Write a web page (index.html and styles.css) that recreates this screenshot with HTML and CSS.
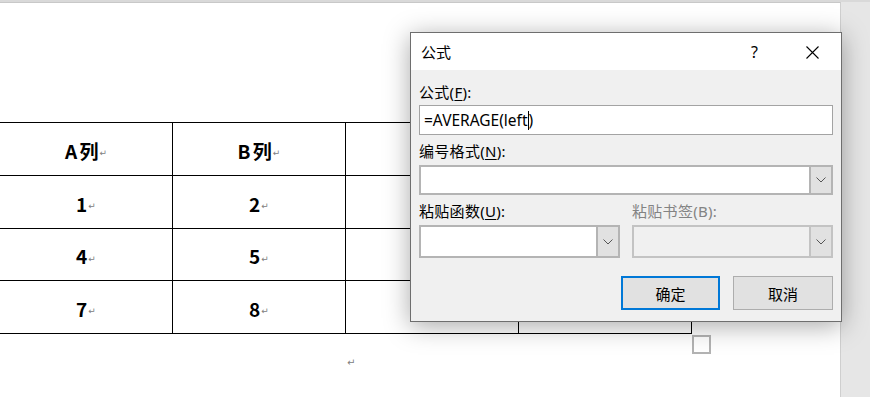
FILE: index.html
```html
<!DOCTYPE html>
<html lang="zh-CN">
<head>
<meta charset="utf-8">
<title>公式</title>
<link rel="stylesheet" href="styles.css">
</head>
<body>
<div class="app">
  <div class="page">
    <div class="grid">
      <div class="cell">A 列<span class="pm">↵</span></div>
      <div class="cell">B 列<span class="pm">↵</span></div>
      <div class="cell"><span class="pm">↵</span></div>
      <div class="cell"><span class="pm">↵</span></div>
      <div class="cell">1<span class="pm">↵</span></div>
      <div class="cell">2<span class="pm">↵</span></div>
      <div class="cell"><span class="pm">↵</span></div>
      <div class="cell"><span class="pm">↵</span></div>
      <div class="cell short">4<span class="pm">↵</span></div>
      <div class="cell short">5<span class="pm">↵</span></div>
      <div class="cell short"><span class="pm">↵</span></div>
      <div class="cell short"><span class="pm">↵</span></div>
      <div class="cell">7<span class="pm">↵</span></div>
      <div class="cell">8<span class="pm">↵</span></div>
      <div class="cell"><span class="pm">↵</span></div>
      <div class="cell"><span class="pm">↵</span></div>
    </div>
    <div class="handle-row"><span class="handle"></span></div>
    <div class="para"><span class="pm">↵</span></div>
  </div>
  <div class="side"></div>
</div>

<div class="dialog">
  <div class="titlebar">
    <span class="title">公式</span>
    <span class="help">?</span>
    <svg class="close" width="13" height="13" viewBox="0 0 13 13"><path d="M0.5 0.5 L12.5 12.5 M12.5 0.5 L0.5 12.5" stroke="#000" stroke-width="1.1" fill="none"/></svg>
  </div>
  <div class="body">
    <div class="label l1">公式(<u>F</u>):</div>
    <div class="input"><span class="val">=AVERAGE(left</span><span class="caret"></span><span class="val">)</span></div>
    <div class="label l2">编号格式(<u>N</u>):</div>
    <div class="combo wide">
      <div class="field"></div>
      <div class="drop"><svg width="10" height="6" viewBox="0 0 10 6"><path d="M0.5 0.5 L5 5 L9.5 0.5" stroke="#555" stroke-width="1" fill="none"/></svg></div>
    </div>
    <div class="row labels">
      <div class="label half">粘贴函数(<u>U</u>):</div>
      <div class="label half disabled">粘贴书签(B):</div>
    </div>
    <div class="row selects">
      <div class="combo half">
        <div class="field"></div>
        <div class="drop"><svg width="10" height="6" viewBox="0 0 10 6"><path d="M0.5 0.5 L5 5 L9.5 0.5" stroke="#555" stroke-width="1" fill="none"/></svg></div>
      </div>
      <div class="combo half off">
        <div class="field"></div>
        <div class="drop"><svg width="10" height="6" viewBox="0 0 10 6"><path d="M0.5 0.5 L5 5 L9.5 0.5" stroke="#555" stroke-width="1" fill="none"/></svg></div>
      </div>
    </div>
    <div class="row buttons">
      <div class="btn primary">确定</div>
      <div class="btn">取消</div>
    </div>
  </div>
</div>
</body>
</html>
```

FILE: styles.css
```css
html, body {
  margin: 0;
  padding: 0;
}
body {
  width: 870px;
  height: 397px;
  overflow: hidden;
  background: #e6e6e6;
  position: relative;
  font-family: "Noto Sans", "Noto Sans CJK SC", sans-serif;
}
.app {
  display: flex;
  height: 397px;
  padding-top: 2px;
  box-sizing: border-box;
  background: #d9d9d9;
}
.page {
  width: 841px;
  flex: none;
  background: #fff;
  border-top: 1px solid #c8c8c8;
  border-right: 1px solid #cfcfcf;
  padding-top: 119px;
  box-sizing: border-box;
  height: 395px;
}
.side {
  flex: 1;
  background: #e6e6e6;
}
.grid {
  display: grid;
  grid-template-columns: repeat(4, 173px);
  margin-left: -1px;
  width: max-content;
  border-top: 1px solid #000;
  border-left: 1px solid #000;
}
.cell {
  border-right: 1px solid #000;
  border-bottom: 1px solid #000;
  display: flex;
  align-items: center;
  justify-content: center;
  font-family: "Noto Sans CJK SC", sans-serif;
  font-weight: bold;
  font-size: 19px;
  word-spacing: -2px;
  color: #000;
  padding-top: 2px;
  box-sizing: content-box;
  height: 50px;
}
.cell.short {
  height: 49px;
}
.pm {
  font-family: "DejaVu Sans", sans-serif;
  font-weight: normal;
  font-size: 9px;
  color: #808080;
  margin-left: 1px;
  position: relative;
  top: 3px;
}
.handle-row {
  display: flex;
  padding-left: 692px;
  margin-top: 1px;
}
.handle {
  width: 15px;
  height: 15px;
  border: 2px solid #b3b3b3;
  background: #fff;
}
.para {
  padding-left: 346px;
  margin-top: 0;
  line-height: 12px;
}
.para .pm {
  font-size: 10px;
  top: 0;
}

/* dialog */
.dialog {
  position: absolute;
  left: 410px;
  top: 32px;
  width: 432px;
  height: 290px;
  box-sizing: border-box;
  border: 1px solid #6e6e6e;
  background: #f0f0f0;
  box-shadow: 0 4px 24px rgba(0, 0, 0, 0.34);
  display: flex;
  flex-direction: column;
  font-size: 15px;
  color: #000;
}
.titlebar {
  height: 37px;
  background: #fff;
  display: flex;
  align-items: center;
  padding-left: 10px;
  padding-right: 22px;
  flex: none;
}
.title {
  flex: 1;
  font-family: "Noto Sans CJK SC", sans-serif;
  font-size: 15px;
  line-height: 20px;
  padding-top: 1px;
}
.help {
  font-family: "Noto Sans", sans-serif;
  font-size: 16px;
  margin-right: 48px;
  padding-top: 1px;
}
.close {
  display: block;
  margin-top: 1px;
}
.body {
  padding: 0 8px 0 8px;
  display: flex;
  flex-direction: column;
}
.label {
  font-size: 15px;
  line-height: 20px;
  height: 20px;
  white-space: nowrap;
  letter-spacing: 0.3px;
}
.label u {
  text-underline-offset: 2px;
}
.l1 {
  margin-top: 12px;
}
.input {
  margin-top: 3px;
  height: 30px;
  box-sizing: border-box;
  border: 1px solid #a3a3a3;
  background: #fff;
  display: flex;
  align-items: center;
  padding-left: 4px;
  font-family: "Noto Sans", sans-serif;
  font-size: 15.5px;
}
.caret {
  width: 1px;
  height: 19px;
  background: #000;
}
.l2 {
  margin-top: 6px;
}
.combo {
  display: flex;
  box-sizing: border-box;
  border: 2px solid #b4b4b4;
  background: #fff;
}
.combo.wide {
  margin-top: 4px;
  height: 30px;
}
.field {
  flex: 1;
}
.drop {
  width: 20px;
  background: #e1e1e1;
  border-left: 2px solid #b4b4b4;
  display: flex;
  align-items: center;
  justify-content: center;
}
.drop svg {
  display: block;
}
.row {
  display: flex;
  gap: 12px;
}
.half {
  width: 201px;
  box-sizing: border-box;
}
.labels {
  margin-top: 6px;
}
.disabled {
  color: #838383;
}
.selects {
  margin-top: 4px;
  height: 33px;
}
.combo.off {
  background: #f0f0f0;
  border-color: #c3c3c3;
}
.combo.off .drop {
  border-left-color: #c3c3c3;
}
.buttons {
  margin-top: 18px;
  justify-content: flex-end;
  gap: 13px;
}
.btn {
  width: 99px;
  height: 34px;
  box-sizing: border-box;
  border: 1px solid #adadad;
  background: #e1e1e1;
  display: flex;
  align-items: center;
  justify-content: center;
  font-family: "Noto Sans CJK SC", sans-serif;
  font-size: 15px;
}
.btn.primary {
  border: 2px solid #0078d7;
}
.btn + .btn {
  width: 100px;
}
```
